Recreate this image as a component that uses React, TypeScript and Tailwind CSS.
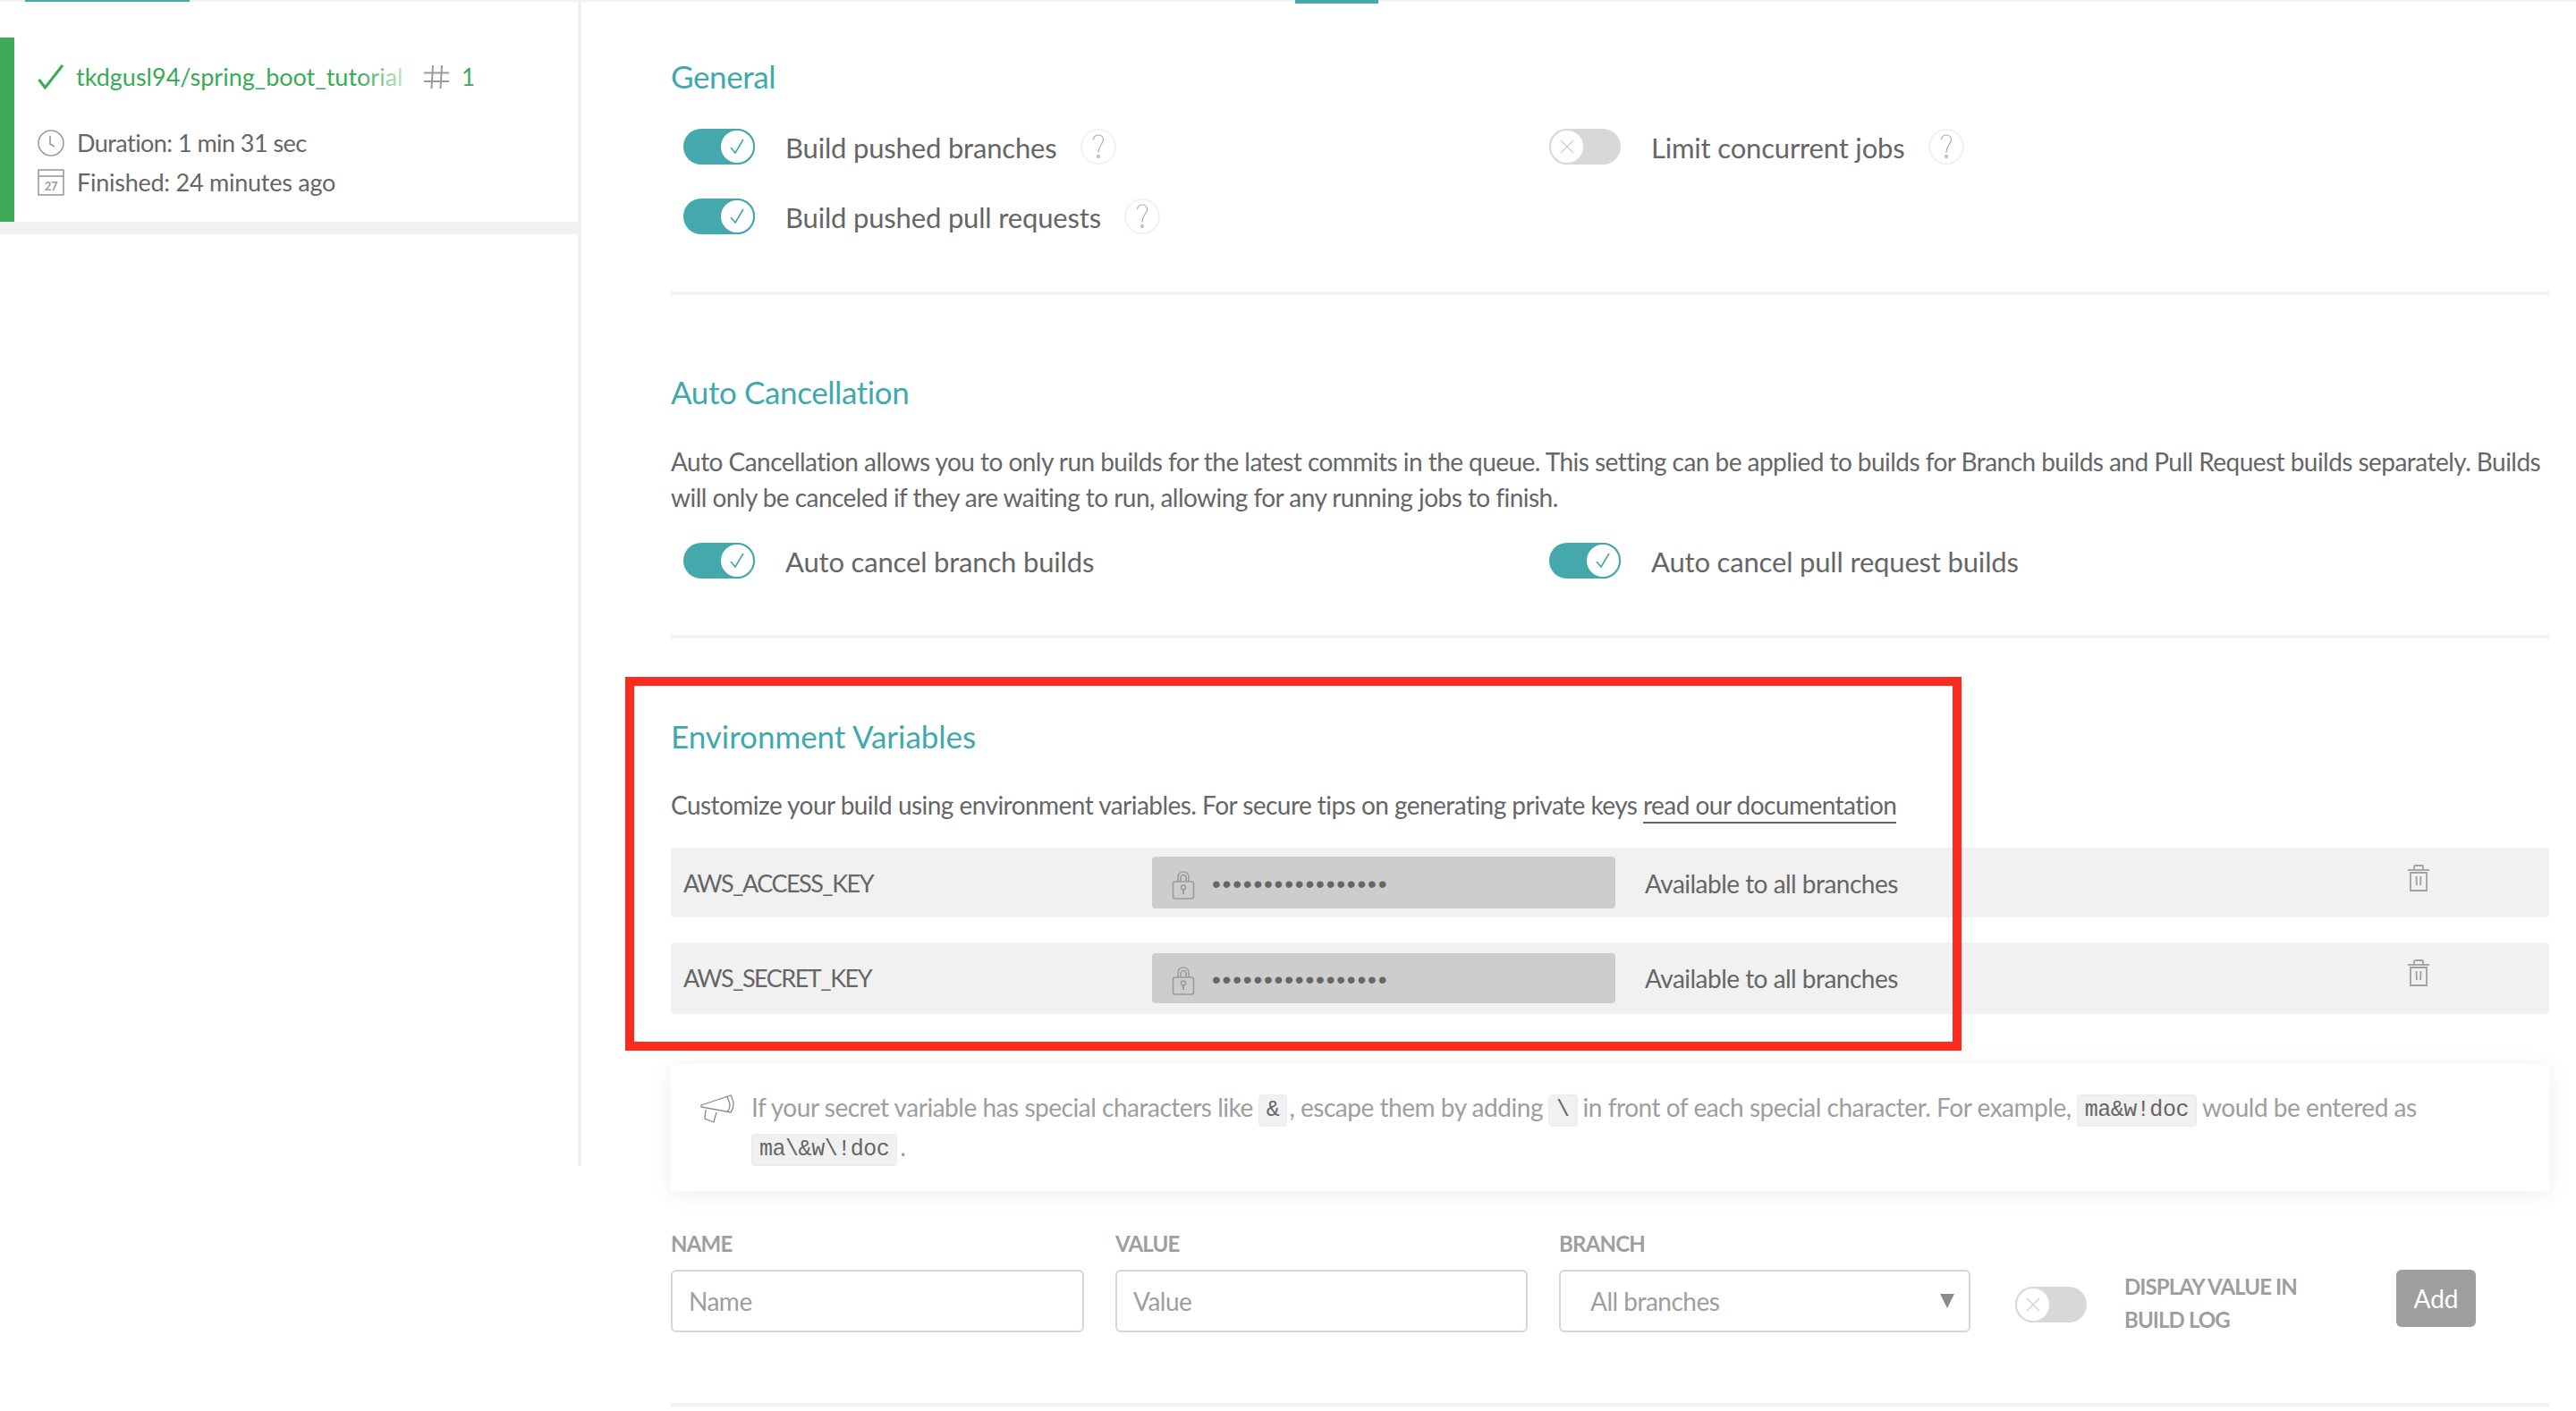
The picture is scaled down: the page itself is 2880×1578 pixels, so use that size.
import type { ReactNode } from 'react';

const font = { fontFamily: '"Lato", "Noto Sans", sans-serif' };

function Toggle({ on, faded }: { on: boolean; faded?: boolean }) {
  if (on) {
    return (
      <div className="flex h-[40px] w-[80px] shrink-0 justify-end rounded-[20px] bg-[#45a8ac]">
        <div className="flex h-[40px] w-[40px] items-center justify-center rounded-full border-2 border-[#45a8ac] bg-white">
          <svg width="22" height="22" viewBox="0 0 22 22" fill="none" stroke="#45a8ac" strokeWidth="1.6">
            <path d="M4 12l5 6L18 3" />
          </svg>
        </div>
      </div>
    );
  }
  return (
    <div className={`flex h-[40px] w-[80px] shrink-0 rounded-[20px] ${faded ? 'bg-[#dadada]' : 'bg-[#d8d8d8]'}`}>
      <div className="flex h-[40px] w-[40px] items-center justify-center rounded-full border-2 border-[#dadada] bg-white">
        <svg width="20" height="20" viewBox="0 0 20 20" fill="none" stroke="#d0d0d0" strokeWidth="1.4">
          <path d="M3 3l14 14M17 3L3 17" />
        </svg>
      </div>
    </div>
  );
}

function Help() {
  return (
    <div className="flex h-[40px] w-[40px] shrink-0 items-center justify-center rounded-full border-2 border-[#f1f1f1]">
      <svg width="14" height="28" viewBox="0 0 14 28" fill="none" stroke="#a8a8a8" strokeWidth="1.2">
        <path d="M1.5 6C2 2.500 4.500 1 7 1c3.500 0 5.500 2.500 5.500 5.500 0 4-5.500 6-5.500 14" />
        <circle cx="7" cy="25" r="1.300" />
      </svg>
    </div>
  );
}

function Option({ on, label, help, faded }: { on: boolean; label: string; help?: boolean; faded?: boolean }) {
  return (
    <div className="flex h-[40px] items-center pl-[14px]">
      <Toggle on={on} faded={faded} />
      <span className="ml-[34px] mt-[2px] text-[31px] leading-[40px] tracking-[-0.17px] text-[#666666]">{label}</span>
      {help && (
        <div className="ml-[26px]">
          <Help />
        </div>
      )}
    </div>
  );
}

function Heading({ children, wide }: { children: ReactNode; wide?: boolean }) {
  return (
    <h2 className={`h-[44px] text-[35px] leading-[42px] text-[#3fa9ad] ${wide ? 'tracking-[-0.05px]' : 'tracking-[-0.4px]'}`}>
      {children}
    </h2>
  );
}

function Divider() {
  return <div className="h-[4px] bg-[#f1f1f1]" />;
}

function Lock() {
  return (
    <svg width="26" height="32" viewBox="0 0 26 32" fill="none" stroke="#9c9c9c" strokeWidth="1.6" className="mt-[5px]">
      <path d="M7 12V7c0-3.500 2.500-6 6-6s6 2.500 6 6v5" />
      <path d="M10 12V8c0-2 1.200-3.500 3-3.500S16 6 16 8v4" />
      <rect x="1.500" y="12" width="23" height="19" rx="2.500" />
      <circle cx="13" cy="18.500" r="2.500" />
      <path d="M13 21v5" strokeWidth="2" />
    </svg>
  );
}

function Trash() {
  return (
    <svg width="24" height="30" viewBox="0 0 24 30" fill="none" stroke="#a0a0a0" strokeWidth="1.800">
      <path d="M0 6h24" />
      <path d="M7 5.500V2.500C7 1.500 7.800 1 8.500 1h7c.7 0 1.500.5 1.500 1.500v3" />
      <path d="M3 9v20h18V9H3z" />
      <path d="M9.500 13l.4 10M14.500 13l-.4 10" />
    </svg>
  );
}

function EnvRow({ name, height, maskTop, maskHeight }: { name: string; height: string; maskTop: string; maskHeight: string }) {
  return (
    <div className={`flex rounded-[4px] bg-[#f1f1f1] text-[#666666] ${height}`}>
      <div className="w-[538px] pl-[14px] pt-[20px] text-[27px] leading-[40px] tracking-[-1.5px]">{name}</div>
      <div className={`flex w-[518px] items-center rounded-[4px] bg-[#cdcdcd] pl-[22px] ${maskTop} ${maskHeight}`}>
        <Lock />
        <span className="ml-[19px] mt-[4px] text-[28px] leading-[28px] tracking-[1.8px] [font-family:'Liberation_Sans',sans-serif]">•••••••••••••••••</span>
      </div>
      <div className="ml-[33px] pt-[20px] text-[28px] leading-[40px] tracking-[-0.52px]">Available to all branches</div>
      <div className="ml-[570px] pt-[19px]">
        <Trash />
      </div>
    </div>
  );
}

function Code({ children, first }: { children: ReactNode; first?: boolean }) {
  return (
    <code
      className={`inline-block h-[36px] rounded-[4px] border border-[#ececec] bg-[#f1f1f1] px-[8px] align-middle text-[25px] leading-[34px] text-[#666666] [font-family:'Liberation_Mono',monospace] ${first ? 'mr-[3px]' : 'mx-[6px]'}`}
    >
      {children}
    </code>
  );
}

function FieldLabel({ children }: { children: ReactNode }) {
  return <div className="h-[28px] text-[24px] font-bold leading-[28px] tracking-[-0.8px] text-[#9e9e9e]">{children}</div>;
}

function Field({ label, placeholder, width }: { label: string; placeholder: string; width: string }) {
  return (
    <div className={`shrink-0 ${width}`}>
      <FieldLabel>{label}</FieldLabel>
      <input
        readOnly
        placeholder={placeholder}
        className="mt-[15px] h-[70px] w-full rounded-[6px] border-2 border-[#d6d6d6] bg-white px-[18px] text-[28px] tracking-[-0.5px] placeholder:text-[#9e9e9e]"
      />
    </div>
  );
}

export default function App() {
  return (
    <div className="flex h-[1578px] w-[2880px] overflow-hidden bg-white" style={font}>
      {/* Sidebar */}
      <aside className="h-[1304px] w-[650px] shrink-0 border-r-4 border-[#f1f1f1]">
        <div className="h-[2px] bg-[#f1f1f1]">
          <div className="ml-[28px] h-[2px] w-[184px] bg-[#45a8ac]" />
        </div>
        <div className="mt-[40px] flex h-[206px]">
          <div className="w-[16px] shrink-0 bg-[#3eaa5a]" />
          <div className="pl-[26px] pt-[28px]">
            <div className="flex h-[32px] items-center">
              <svg width="30" height="28" viewBox="0 0 30 28" fill="none" stroke="#39aa56" strokeWidth="3" className="shrink-0">
                <path d="M1.500 17l7 9L28 1" />
              </svg>
              <span className="relative ml-[13px] w-[366px] overflow-hidden whitespace-nowrap text-[27px] leading-[32px] tracking-[0px] text-[#39aa56]">
                tkdgusl94/spring_boot_tutorial
                <span className="absolute right-0 top-0 h-full w-[50px] bg-gradient-to-r from-white/0 to-white/70" />
              </span>
              <svg width="28" height="28" viewBox="0 0 28 28" fill="none" stroke="#9c9c9c" strokeWidth="2" className="ml-[23px] shrink-0">
                <path d="M10 1L8.500 27M20 1l-1.500 26M0 9.500h28M0 19h28" />
              </svg>
              <span className="ml-[14px] text-[26px] text-[#39aa56]">1</span>
            </div>
            <div className="mt-[42px] flex h-[32px] items-center text-[27px] tracking-[-0.55px] text-[#666666]">
              <svg width="30" height="30" viewBox="0 0 30 30" fill="none" stroke="#9c9c9c" strokeWidth="1.600" className="shrink-0">
                <circle cx="15" cy="15" r="14" />
                <path d="M14 7v9l5 3" />
              </svg>
              <span className="ml-[14px]">Duration: 1 min 31 sec</span>
            </div>
            <div className="mt-[12px] flex h-[32px] items-center text-[27px] tracking-[-0.25px] text-[#666666]">
              <svg width="30" height="30" viewBox="0 0 30 30" fill="none" stroke="#9c9c9c" strokeWidth="1.600" className="shrink-0">
                <rect x="1" y="1" width="28" height="28" />
                <path d="M1 8h28" />
                <text x="15" y="24" fontSize="13" textAnchor="middle" fill="#9c9c9c" stroke="none" fontWeight="700">27</text>
              </svg>
              <span className="ml-[14px]">Finished: 24 minutes ago</span>
            </div>
          </div>
        </div>
        <div className="h-[14px] bg-[#f1f1f1]" />
      </aside>

      {/* Settings */}
      <main className="min-w-0 flex-1">
        <div className="h-[2px] bg-[#f1f1f1]">
          <div className="ml-[798px] h-[4px] w-[93px] bg-[#45a8ac]" />
        </div>
        <div className="ml-[100px] w-[2100px] pt-[62px]">
          <Heading>General</Heading>
          <div className="mt-[36px] grid grid-cols-[982px_1fr]">
            <div className="space-y-[38px]">
              <Option on label="Build pushed branches" help />
              <Option on label="Build pushed pull requests" help />
            </div>
            <div className="-ml-[14px]">
              <Option on={false} label="Limit concurrent jobs" help />
            </div>
          </div>
          <div className="mt-[64px]">
            <Divider />
          </div>

          <div className="mt-[87px]">
            <Heading>Auto Cancellation</Heading>
          </div>
          <p className="mt-[35px] text-[28px] leading-[40px] tracking-[-0.54px] text-[#666666]">
            Auto Cancellation allows you to only run builds for the latest commits in the queue. This setting can be applied to builds for Branch builds and Pull Request builds separately. Builds will only be canceled if they are waiting to run, allowing for any running jobs to finish.
          </p>
          <div className="mt-[31px] grid grid-cols-[982px_1fr]">
            <Option on label="Auto cancel branch builds" />
            <div className="-ml-[14px]">
              <Option on label="Auto cancel pull request builds" />
            </div>
          </div>
          <div className="mt-[63px]">
            <Divider />
          </div>

          {/* Environment variables */}
          <section className="relative mt-[88px]">
            <div className="absolute -left-[51px] -top-[45px] h-[418px] w-[1494px] border-[10px] border-[#fb2b1f]" />
            <Heading wide>Environment Variables</Heading>
            <p className="mt-[34px] text-[28px] leading-[40px] tracking-[-0.54px] text-[#666666]">
              Customize your build using environment variables. For secure tips on generating private keys{' '}
              <span className="border-b-2 border-[#666666] pb-[2px]">read our documentation</span>
            </p>
            <div className="mt-[28px]">
              <EnvRow name="AWS_ACCESS_KEY" height="h-[78px]" maskTop="mt-[10px]" maskHeight="h-[58px]" />
            </div>
            <div className="mt-[28px]">
              <EnvRow name="AWS_SECRET_KEY" height="h-[80px]" maskTop="mt-[12px]" maskHeight="h-[56px]" />
            </div>
          </section>

          <div className="mt-[56px] flex h-[142px] bg-white pl-[33px] pr-[40px] pt-[26px] text-[28px] leading-[44px] tracking-[-0.47px] text-[#9e9e9e] shadow-[0_4px_24px_rgba(0,0,0,0.07)]">
            <svg width="38" height="32" viewBox="0 0 38 32" fill="none" stroke="#888888" strokeWidth="1.300" className="mt-[8px] shrink-0">
              <path d="M1 12L34 1c2 4 3 7 3 10s-1 6-3 9L1 14z" />
              <path d="M30 3c2 4 3 6 3 9s-1 5-3 8" />
              <path d="M6 17l-1 10 10 4 3-11" />
            </svg>
            <div className="ml-[19px]">
              If your secret variable has special characters like<Code>&amp;</Code>
              <span className="-ml-[4px]">, escape them by adding</span>
              <Code>\</Code>in front of each special character. For example,<Code>ma&amp;w!doc</Code>would be entered as
              <br />
              <Code first>ma\&amp;w\!doc</Code>.
            </div>
          </div>

          <div className="mt-[45px] flex">
            <Field label="NAME" placeholder="Name" width="w-[462px]" />
            <div className="ml-[35px]">
              <Field label="VALUE" placeholder="Value" width="w-[461px]" />
            </div>
            <div className="ml-[35px] w-[460px]">
              <FieldLabel>BRANCH</FieldLabel>
              <div className="mt-[15px] flex h-[70px] items-center justify-between rounded-[6px] border-2 border-[#d6d6d6] pl-[33px] pr-[16px] text-[28px] tracking-[-0.5px] text-[#9e9e9e]">
                All branches
                <svg width="16" height="18" viewBox="0 0 16 18" fill="#8a8a8a">
                  <path d="M0 1h16L8 17z" />
                </svg>
              </div>
            </div>
            <div className="ml-[50px] mt-[62px]">
              <Toggle on={false} />
            </div>
            <div className="ml-[42px] mt-[43px] w-[220px] text-[24px] font-bold leading-[37px] tracking-[-0.9px] text-[#9e9e9e]">
              DISPLAY VALUE IN BUILD LOG
            </div>
            <button className="ml-[84px] mt-[43px] h-[64px] w-[89px] rounded-[6px] bg-[#9e9e9e] text-[28px] text-white">Add</button>
          </div>
          <div className="mt-[75px]">
            <Divider />
          </div>
        </div>
      </main>
    </div>
  );
}
